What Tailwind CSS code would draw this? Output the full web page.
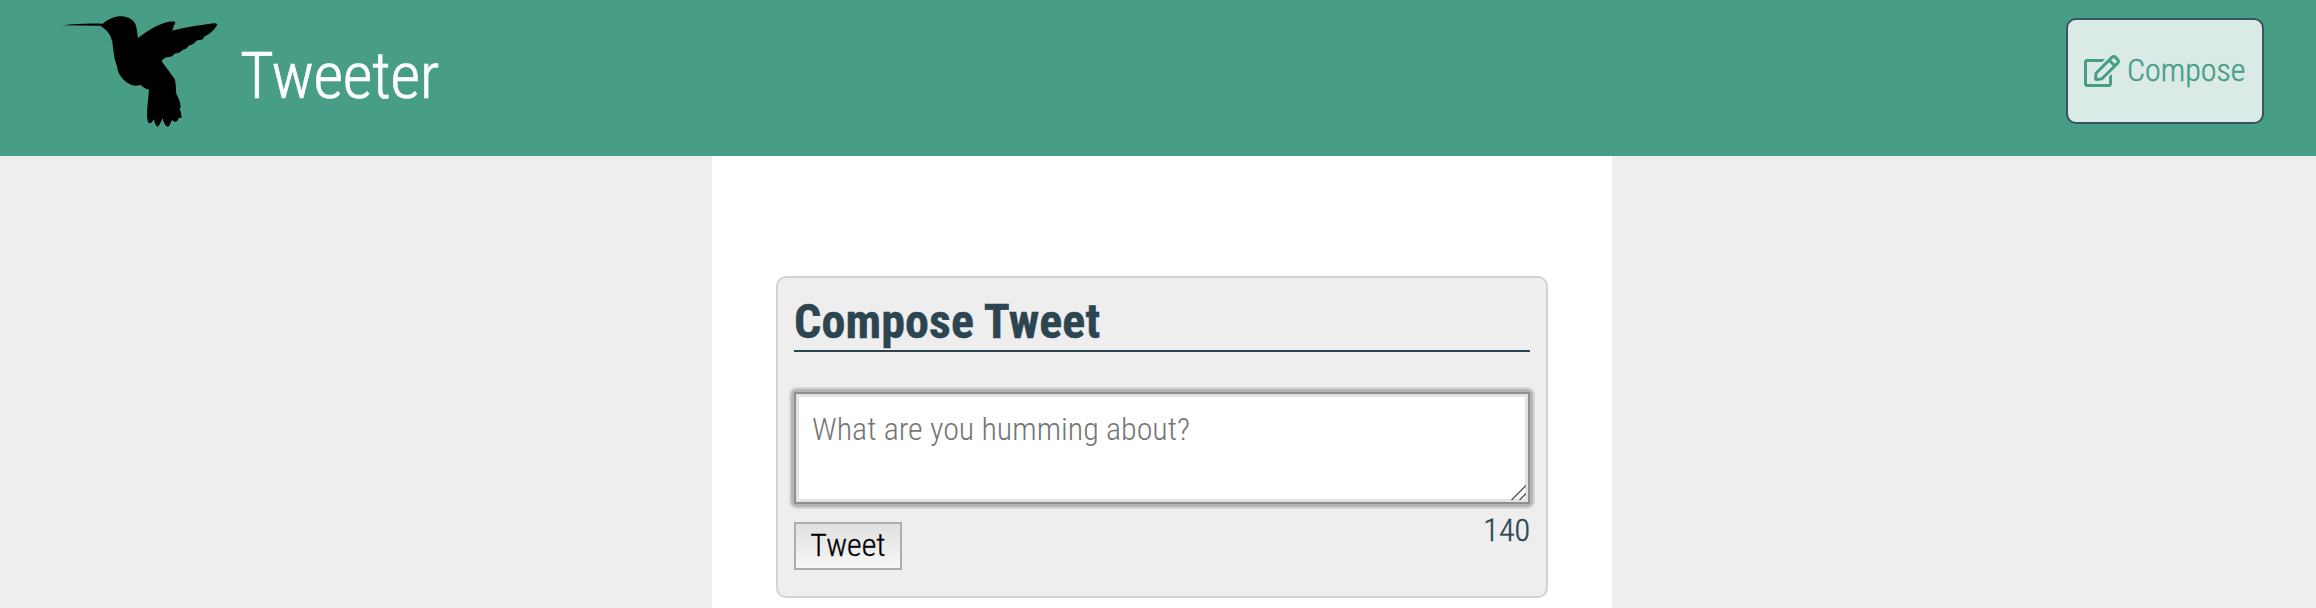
<!DOCTYPE html>
<html lang="en">
<head>
<meta charset="utf-8">
<title>Tweeter</title>
<script src="https://cdn.jsdelivr.net/npm/@tailwindcss/browser@4"></script>
</head>
<body class="h-[608px] overflow-hidden bg-[#eeeeee] font-['Roboto_Condensed','Roboto',sans-serif] font-light font-stretch-condensed text-[32px] text-[#2d4550]">
<header class="flex h-[156px] items-start justify-between bg-[#489d87] pl-[50px] pr-[52px]">
  <div class="flex items-start">
    <svg class="h-[156px] w-[180px]" viewBox="0 0 540 468" aria-hidden="true">
      <path d="M38 76C75 71 115 69 158 71C175 57 194 49 213 49C239 50 254 63 258 77C261 89 262 101 264 114C287 96 318 77 342 69C352 66 366 63 376 66C375 72 374 76 370 78C371 84 369 88 365 92C407 82 450 75 490 70C501 69 504 72 500 78C491 91 478 103 468 107C461 109 461 114 458 118C452 121 445 119 438 123C433 131 427 134 422 135L416 137C412 143 406 148 399 149C393 153 393 156 385 159L373 161C370 167 363 171 356 171C347 171 338 176 335 184L374 237C378 248 377 262 379 281C384 292 390 303 391 312L392 322L389 326L393 338L395 353L386 354C384 363 378 367 373 365L366 360C362 367 359 380 353 380C345 379 340 365 338 355C332 365 329 379 322 380C316 377 313 365 312 358C308 363 305 370 299 370C293 369 292 358 291 345C291 316 296 292 297 269C288 267 279 261 271 254C264 258 254 258 245 255C229 249 212 235 204 214L200 196L195 181L191 158L187 126L182 110C175 95 165 85 151 77Z"/>
    </svg>
    <div class="mt-[36px] pl-[10px] text-[65px] leading-[80px] tracking-[-0.5px] text-white [-webkit-text-stroke:0.6px_#ffffff]">Tweeter</div>
  </div>
  <button class="mt-[18px] flex h-[106px] w-[198px] items-center rounded-[10px] border-2 border-[#34565f] bg-[#daeae6] pl-4 text-[#489d87]">
    <svg class="h-8 w-9 shrink-0" viewBox="0 0 576 512" fill="currentColor" aria-hidden="true"><path d="M402.300 344.900l32-32c5-5 13.700-1.500 13.700 5.700V464c0 26.500-21.500 48-48 48H48c-26.500 0-48-21.500-48-48V112c0-26.500 21.500-48 48-48h273.500c7.100 0 10.700 8.600 5.700 13.700l-32 32c-1.500 1.500-3.500 2.300-5.700 2.300H48v352h352V350.500c0-2.100.8-4.100 2.300-5.600zm156.600-201.800L296.300 405.700l-90.400 10c-26.200 2.900-48.500-19.200-45.600-45.600l10-90.400L432.900 17.100c22.900-22.900 59.900-22.900 82.700 0l43.200 43.200c22.900 22.900 22.900 60 .1 82.800zM460.100 174L402 115.900 216.200 301.800l-7.300 65.300 65.300-7.300L460.100 174zm64.800-79.700l-43.200-43.200c-4.100-4.100-10.800-4.100-14.800 0L436 82l58.100 58.100 30.900-30.900c4-4.200 4-10.800-.1-14.900z"/></svg>
    <span class="pb-0.5 pl-[7px] [-webkit-text-stroke:0.4px_#489d87]">Compose</span>
  </button>
</header>
<main class="ml-[712px] h-[452px] w-[900px] bg-white px-16 pt-[120px]">
  <section class="h-[322px] rounded-[10px] border-2 border-[#d2d2d2] bg-[#eeeeee] px-4 pt-4">
    <h1 class="h-[58px] border-b-2 border-[#2d4550] text-[48px] leading-[56px] font-bold tracking-[0.1px] [-webkit-text-stroke:0.4px_#2d4550]">Compose Tweet</h1>
    <form class="pt-10">
      <div class="relative rounded-[3px] shadow-[0_0_0_3px_#b5b5b6,0_0_0_5px_#d6d6d7]">
        <textarea class="block h-[112px] w-full resize-none border-2 border-[#8f8f90] bg-white px-4 py-4 leading-[38px] outline-none shadow-[inset_0_0_0_3px_#e3e3e3] placeholder:text-[#757575]" placeholder="What are you humming about?"></textarea>
        <svg class="pointer-events-none absolute right-[4px] bottom-[3px] size-4" viewBox="0 0 16 16" stroke="#555555" stroke-width="1.3" aria-hidden="true"><path d="M1.500 15L16 .5M9.500 15L16 8.500"/></svg>
      </div>
      <div class="flex items-start justify-between">
        <button type="button" class="mt-[18px] h-[48px] w-[108px] border-2 border-[#adadad] bg-linear-to-b from-[#e0e0e0] to-[#f7f7f7] pb-0.5 leading-[42px] text-black [-webkit-text-stroke:0.3px_#000000]">Tweet</button>
        <span class="mt-[7px] leading-[38px] [-webkit-text-stroke:0.4px_#2d4550]">140</span>
      </div>
    </form>
  </section>
</main>
</body>
</html>
